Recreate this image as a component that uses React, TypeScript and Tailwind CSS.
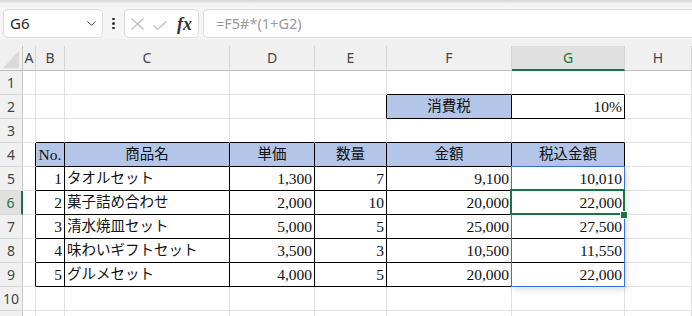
import React from "react";
import clsx from "clsx";
import { ChevronDown } from "lucide-react";

const COLS = ["A", "B", "C", "D", "E", "F", "G", "H"];

type Align = "left" | "right" | "center";
type Cell = { text: string; align: Align; cjk?: boolean; fill?: boolean };

const items: [string, string, string, string, string, string][] = [
  ["1", "タオルセット", "1,300", "7", "9,100", "10,010"],
  ["2", "菓子詰め合わせ", "2,000", "10", "20,000", "22,000"],
  ["3", "清水焼皿セット", "5,000", "5", "25,000", "27,500"],
  ["4", "味わいギフトセット", "3,500", "3", "10,500", "11,550"],
  ["5", "グルメセット", "4,000", "5", "20,000", "22,000"],
];

// sheet content keyed by row, then by column index (1 = A ... 8 = H)
const sheet: Record<number, Record<number, Cell>> = {
  2: {
    6: { text: "消費税", align: "center", cjk: true, fill: true },
    7: { text: "10%", align: "right" },
  },
  4: {
    2: { text: "No.", align: "center", fill: true },
    3: { text: "商品名", align: "center", cjk: true, fill: true },
    4: { text: "単価", align: "center", cjk: true, fill: true },
    5: { text: "数量", align: "center", cjk: true, fill: true },
    6: { text: "金額", align: "center", cjk: true, fill: true },
    7: { text: "税込金額", align: "center", cjk: true, fill: true },
  },
};

items.forEach((it, i) => {
  sheet[5 + i] = {
    2: { text: it[0], align: "right" },
    3: { text: it[1], align: "left", cjk: true },
    4: { text: it[2], align: "right" },
    5: { text: it[3], align: "right" },
    6: { text: it[4], align: "right" },
    7: { text: it[5], align: "right" },
  };
});

const rightBlack = (r: number, c: number) =>
  (r >= 4 && r <= 9 && c >= 1 && c <= 7) || (r === 2 && c >= 5 && c <= 7);
const bottomBlack = (r: number, c: number) =>
  (r >= 3 && r <= 9 && c >= 2 && c <= 7) || (r >= 1 && r <= 2 && c >= 6 && c <= 7);

const GRID = "grid grid-cols-[23px_13px_29px_165px_85px_72px_125px_113px_1fr]";
const UI_FONT = "font-['Noto_Sans','Noto_Sans_CJK_JP',sans-serif]";

const FormulaBar = () => (
  <div className="h-[36px] bg-[#f5f5f5] flex items-start pt-[6px] pl-[3px]">
    {/* Name box */}
    <div className="w-[100px] h-[29px] bg-white border border-[#dcdcdc] rounded-[5px] flex items-center justify-between pl-[6px] pr-[3px]">
      <span className="text-[15px] text-[#262626]">G6</span>
      <ChevronDown size={15} strokeWidth={1.6} className="text-[#404040]" />
    </div>
    {/* vertical dots */}
    <div className="w-[21px] h-[29px] flex flex-col items-center justify-center gap-[2px]">
      <span className="w-[2.5px] h-[2.5px] rounded-full bg-[#333]" />
      <span className="w-[2.5px] h-[2.5px] rounded-full bg-[#333]" />
      <span className="w-[2.5px] h-[2.5px] rounded-full bg-[#333]" />
    </div>
    {/* cancel / enter / fx */}
    <div className="w-[75px] h-[29px] bg-white border border-[#dcdcdc] rounded-[5px] flex items-center pl-[6px]">
      <svg width="13" height="12" viewBox="0 0 13 12" className="mt-[1px]">
        <path d="M0.5 0.5 L12.5 11.5 M12.5 0.5 L0.5 11.5" stroke="#bdbdbd" strokeWidth="1.2" fill="none" />
      </svg>
      <svg width="14" height="9" viewBox="0 0 14 9" className="ml-[9px] mt-[3px]">
        <path d="M0.5 4.5 L4.5 8.4 L13.5 0.5" stroke="#bdbdbd" strokeWidth="1.2" fill="none" />
      </svg>
      <span className="ml-[10px] font-['Liberation_Serif',serif] italic font-bold text-[18px] leading-none text-[#333]">
        fx
      </span>
    </div>
    {/* formula input */}
    <div className="ml-[4px] flex-1 h-[29px] bg-white border border-[#dcdcdc] border-r-0 rounded-l-[5px] flex items-center pl-[12px]">
      <span className="text-[14.5px] text-[#9a9a9a]">=F5#*(1+G2)</span>
    </div>
  </div>
);

const ColumnHeaders = () => (
  <div className="bg-[#f0f0f0] pt-[7px]">
    <div className={GRID}>
      <div className="h-[25px] border-r border-b border-r-[#c8c8c8] border-b-[#bdbdbd] flex items-end pl-[3px] pb-[2px]">
        <svg width="16" height="17" viewBox="0 0 16 17">
          <polygon points="16,0 16,17 0,17" fill="#dadada" />
        </svg>
      </div>
      {COLS.map((c) => (
        <div
          key={c}
          className={clsx(
            "h-[25px] border-r border-r-[#d6d6d6] flex items-center justify-center text-[14px] leading-none",
            c === "G"
              ? "bg-[#e0e0e0] border-b-2 border-b-[#1e7145] text-[#1e7145]"
              : "border-b border-b-[#bdbdbd] text-[#444]"
          )}
        >
          {c}
        </div>
      ))}
    </div>
  </div>
);

const Body = () => {
  const rowsNums = Array.from({ length: 11 }, (_, i) => i + 1);
  return (
    <div className="relative">
      <div className={GRID}>
        {rowsNums.map((r) => (
          <React.Fragment key={r}>
            <div
              className={clsx(
                "h-[24px] border-b border-b-[#d8d8d8] flex items-center justify-center text-[14px] leading-none",
                r === 6
                  ? "bg-[#e0e0e0] text-[#1e7145] border-r-2 border-r-[#1e7145]"
                  : "bg-[#f0f0f0] text-[#444] border-r border-r-[#c8c8c8]"
              )}
            >
              {r <= 10 ? r : ""}
            </div>
            {COLS.map((_, ci) => {
              const c = ci + 1;
              const cell = sheet[r]?.[c];
              return (
                <div
                  key={c}
                  className={clsx(
                    "h-[24px] border-r border-b overflow-hidden whitespace-nowrap leading-[23px] font-['Liberation_Serif','Noto_Sans_CJK_JP',serif] text-[#111]",
                    rightBlack(r, c) ? "border-r-black" : "border-r-[#e1e1e1]",
                    bottomBlack(r, c) ? "border-b-black" : "border-b-[#e1e1e1]",
                    cell?.fill && "bg-[#b4c6e7]",
                    cell?.cjk ? "text-[14.5px]" : "text-[15.5px]",
                    cell?.align === "right" && "text-right pr-[2px]",
                    cell?.align === "center" && "text-center",
                    cell?.align === "left" && "pl-[2px]"
                  )}
                >
                  {cell?.text}
                </div>
              );
            })}
          </React.Fragment>
        ))}
      </div>
      {/* spill range outline G5:G9 */}
      <div className="absolute left-[511px] top-[95px] w-[114px] h-[121px] border border-[#3c6fd6] shadow-[2px_3px_6px_rgba(0,0,0,0.12)] pointer-events-none" />
      {/* active cell G6 */}
      <div className="absolute left-[510px] top-[118px] w-[115px] h-[26px] border-2 border-[#1e7145] pointer-events-none" />
      <div className="absolute left-[620px] top-[140px] w-[8px] h-[8px] bg-[#1e7145] border border-white pointer-events-none" />
    </div>
  );
};

export default function App() {
  return (
    <div className={clsx("w-[692px] h-[316px] overflow-hidden bg-white", UI_FONT)}>
      <div className="h-[3px] bg-gradient-to-b from-[#d4d4d4] to-[#ededed]" />
      <FormulaBar />
      <ColumnHeaders />
      <Body />
    </div>
  );
}
